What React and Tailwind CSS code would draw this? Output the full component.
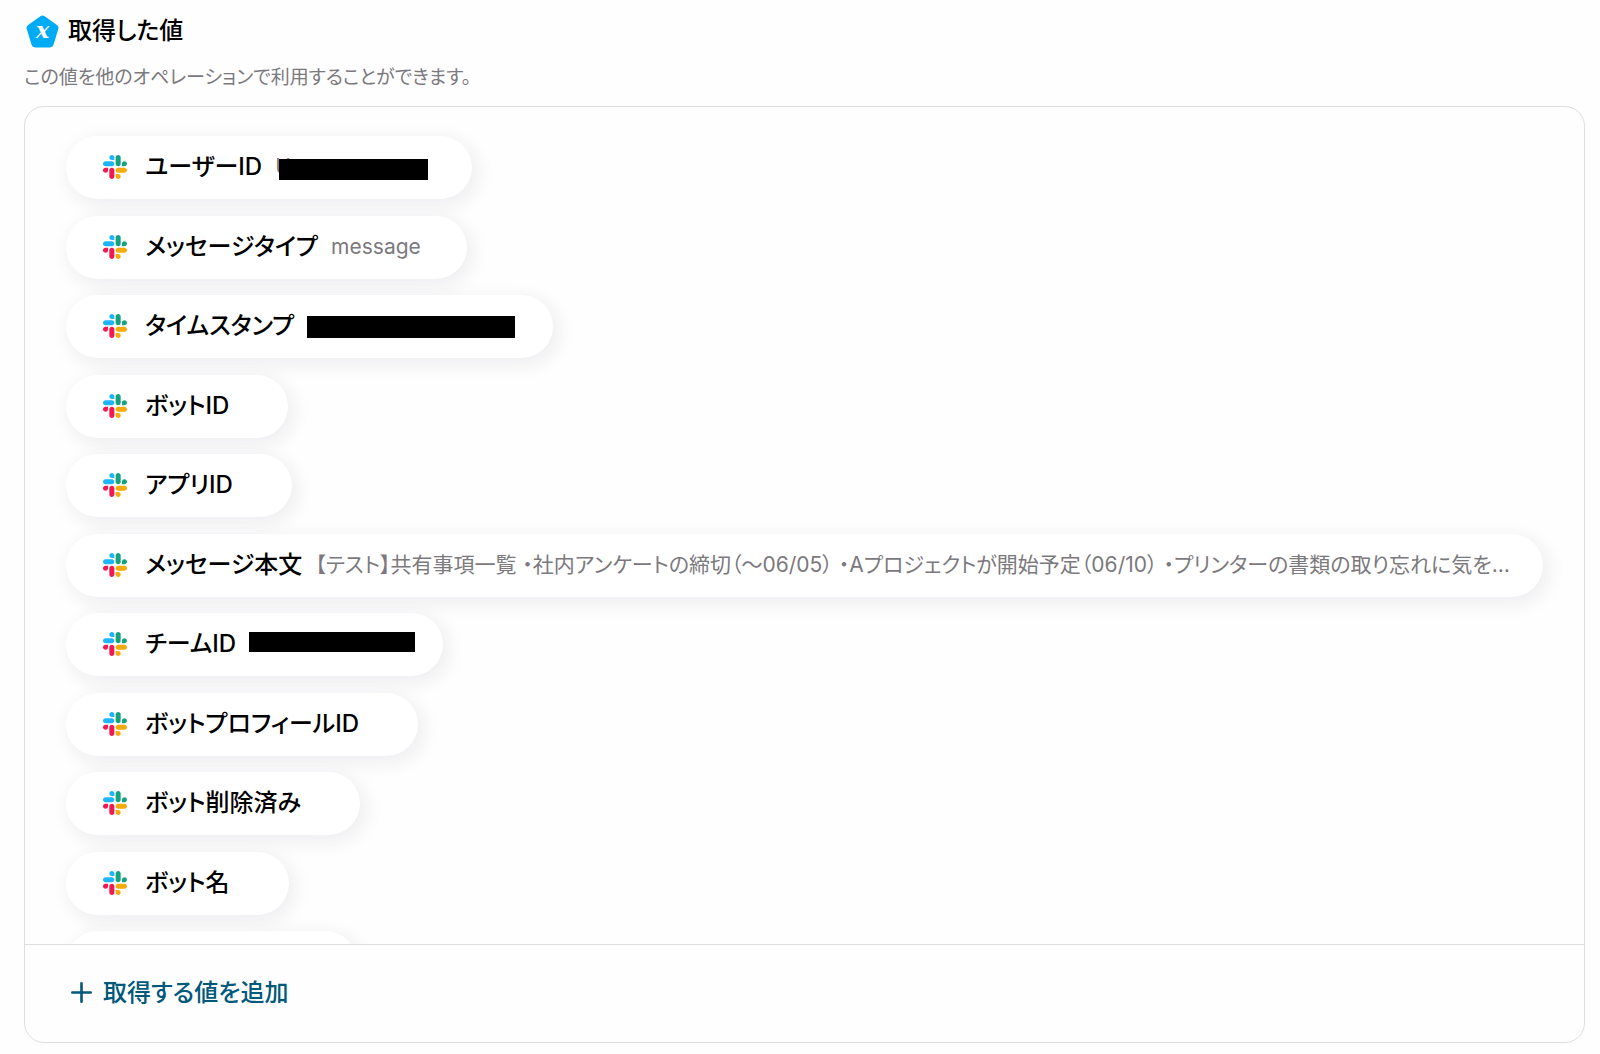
import React from "react";

const items = [
  { label: "ユーザーID", value: "U", box: "w-[151px]", bar: "left-1 top-1.5 h-[21px] w-[149px]" },
  { label: "メッセージタイプ", value: "message" },
  { label: "タイムスタンプ", box: "w-[200px]", bar: "left-0 top-1 h-[22px] w-[208px]" },
  { label: "ボットID" },
  { label: "アプリID" },
  {
    label: "メッセージ本文",
    value:
      "【テスト】共有事項一覧 ・社内アンケートの締切（〜06/05） ・Aプロジェクトが開始予定（06/10） ・プリンターの書類の取り忘れに気を…",
    wide: true,
  },
  { label: "チームID", box: "w-[148px]", bar: "left-0 top-0.5 h-5 w-[166px]" },
  { label: "ボットプロフィールID" },
  { label: "ボット削除済み" },
  { label: "ボット名" },
];

const SlackIcon = () => (
  <svg viewBox="0 0 122.8 122.8" className="size-6 shrink-0" aria-hidden="true">
    <path
      fill="#f5184f"
      d="M25.8 77.6c0 7.1-5.8 12.9-12.9 12.9S0 84.7 0 77.6s5.8-12.9 12.9-12.9h12.9v12.9zm6.5 0c0-7.1 5.8-12.9 12.9-12.9s12.9 5.8 12.9 12.9v32.3c0 7.1-5.8 12.9-12.9 12.9s-12.9-5.8-12.9-12.9V77.6z"
    />
    <path
      fill="#1eb5ff"
      d="M45.2 25.8c-7.1 0-12.9-5.8-12.9-12.9S38.1 0 45.2 0s12.9 5.8 12.9 12.9v12.9H45.2zm0 6.5c7.1 0 12.9 5.8 12.9 12.9s-5.8 12.9-12.9 12.9H12.9C5.8 58.1 0 52.3 0 45.2s5.8-12.9 12.9-12.9h32.3z"
    />
    <path
      fill="#14a37f"
      d="M97 45.2c0-7.1 5.8-12.9 12.9-12.9s12.9 5.8 12.9 12.9-5.8 12.9-12.9 12.9H97V45.2zm-6.5 0c0 7.1-5.8 12.9-12.9 12.9s-12.9-5.8-12.9-12.9V12.9C64.7 5.8 70.5 0 77.6 0s12.9 5.8 12.9 12.9v32.3z"
    />
    <path
      fill="#f5ab0b"
      d="M77.6 97c7.1 0 12.9 5.8 12.9 12.9s-5.8 12.9-12.9 12.9-12.9-5.8-12.9-12.9V97h12.9zm0-6.5c-7.1 0-12.9-5.8-12.9-12.9s5.8-12.9 12.9-12.9h32.3c7.1 0 12.9 5.8 12.9 12.9s-5.8 12.9-12.9 12.9H77.6z"
    />
  </svg>
);

const VariableIcon = () => (
  <svg viewBox="0 0 32 32" className="size-[34px] shrink-0" aria-hidden="true">
    <path
      d="M16.5 5 28 13.2 23.5 28h-14L5 13.2z"
      fill="#00abf5"
      stroke="#00abf5"
      strokeWidth="7"
      strokeLinejoin="round"
    />
    <text
      x="16.5"
      y="23"
      textAnchor="middle"
      fill="#fff"
      className="font-['DejaVu_Serif',serif] text-[21px] font-bold italic">
      x
    </text>
  </svg>
);

const ValuePill = ({ item }) => (
  <li
    className={`flex h-[63px] max-w-full shrink-0 items-center rounded-full bg-white pb-px pl-[37px] pr-[46px] shadow-[4px_5px_20px_rgba(50,35,65,0.09)] ${
      item.wide ? "w-full" : ""
    }`}>
    <SlackIcon />
    <span className="ml-[18px] shrink-0 text-2xl leading-8 font-medium text-black">{item.label}</span>
    <span
      className={`relative ml-[13px] h-7 shrink-0 text-[21px] leading-7 whitespace-nowrap text-[#7b797d] ${item.box || ""}`}>
      {item.value}
      {item.bar && <span className={`absolute bg-black ${item.bar}`} />}
    </span>
  </li>
);

const App = () => {
  return (
    <main className="bg-[#fefefe] pt-[14px] pr-[15px] pb-[11px] pl-6 font-['Inter','Noto_Sans_CJK_JP',sans-serif] [font-feature-settings:'palt']">
      <header>
        <h1 className="flex items-center gap-[9px] pl-px text-2xl leading-8 font-medium text-black">
          <VariableIcon />
          取得した値
        </h1>
        <p className="mt-4 text-[19px] leading-7 text-[#7b797d]">
          この値を他のオペレーションで利用することができます。
        </p>
      </header>

      <section className="mt-[14px] overflow-hidden rounded-[20px] border border-[#dfdde1]">
        <div className="h-[837px] overflow-hidden px-[41px] pt-[29px]">
          <ul className="flex h-[858px] flex-col items-start justify-between">
            {items.map((item) => (
              <ValuePill key={item.label} item={item} />
            ))}
            <li className="h-[63px] w-[291px] shrink-0 rounded-full bg-white shadow-[4px_5px_20px_rgba(50,35,65,0.09)]" />
          </ul>
        </div>
        <div className="flex h-[98px] items-center border-t border-[#dfdde1] px-[46px] pb-0.5">
          <button
            type="button"
            className="flex cursor-pointer items-center gap-[11px] text-2xl leading-8 font-medium text-[#00587a]">
            <svg viewBox="0 0 21 21" className="size-[21px] shrink-0" aria-hidden="true">
              <path d="M10.5 1.3v18.4M1.3 10.5h18.4" stroke="currentColor" strokeWidth="2.6" strokeLinecap="round" />
            </svg>
            取得する値を追加
          </button>
        </div>
      </section>
    </main>
  );
};

export default App;
